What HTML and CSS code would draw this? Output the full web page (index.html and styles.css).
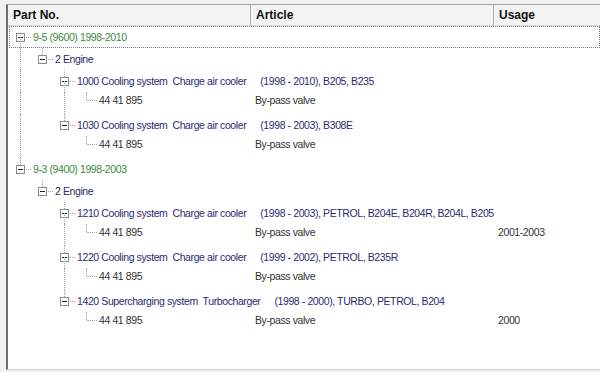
FILE: index.html
```html
<!DOCTYPE html>
<html lang="en">
<head>
    <meta charset="UTF-8">
    <title>Parts tree</title>
    <link rel="stylesheet" href="styles.css">
</head>
<body>
    <div class="window">
        <div class="header">
            <div class="hcell col-part">Part No.</div>
            <div class="hcell col-article">Article</div>
            <div class="hcell col-usage">Usage</div>
        </div>

        <div class="tree">
            <!-- 9-5 -->
            <div class="row model selected">
                <span class="g dn"><span class="stem"></span><span class="knot"><span class="box"></span><span class="dash"></span></span><span class="stem"></span></span>
                <span class="label">9-5 (9600) 1998-2010</span>
            </div>
            <div class="row group">
                <span class="g pipe"><span class="stem"></span></span>
                <span class="g up"><span class="stem"></span><span class="knot"><span class="box"></span><span class="dash"></span></span><span class="stem"></span></span>
                <span class="label">2 Engine</span>
            </div>
            <div class="row part">
                <span class="g pipe"><span class="stem"></span></span>
                <span class="g"></span>
                <span class="g up dn"><span class="stem"></span><span class="knot"><span class="box"></span><span class="dash"></span></span><span class="stem"></span></span>
                <span class="label">1000 Cooling system  Charge air cooler<span class="spec">(1998 - 2010), B205, B235</span></span>
            </div>
            <div class="row leaf">
                <div class="cell-part">
                    <span class="g pipe"><span class="stem"></span></span>
                    <span class="g"></span>
                    <span class="g pipe"><span class="stem"></span></span>
                    <span class="g up"><span class="stem"></span><span class="knot"><span class="dash"></span></span><span class="stem"></span></span>
                    <span class="label">44 41 895</span>
                </div>
                <div class="cell-article">By-pass valve</div>
                <div class="cell-usage"></div>
            </div>
            <div class="row part">
                <span class="g pipe"><span class="stem"></span></span>
                <span class="g"></span>
                <span class="g up"><span class="stem"></span><span class="knot"><span class="box"></span><span class="dash"></span></span><span class="stem"></span></span>
                <span class="label">1030 Cooling system  Charge air cooler<span class="spec">(1998 - 2003), B308E</span></span>
            </div>
            <div class="row leaf">
                <div class="cell-part">
                    <span class="g pipe"><span class="stem"></span></span>
                    <span class="g"></span>
                    <span class="g"></span>
                    <span class="g up"><span class="stem"></span><span class="knot"><span class="dash"></span></span><span class="stem"></span></span>
                    <span class="label">44 41 895</span>
                </div>
                <div class="cell-article">By-pass valve</div>
                <div class="cell-usage"></div>
            </div>

            <!-- 9-3 -->
            <div class="row model">
                <span class="g up"><span class="stem"></span><span class="knot"><span class="box"></span><span class="dash"></span></span><span class="stem"></span></span>
                <span class="label">9-3 (9400) 1998-2003</span>
            </div>
            <div class="row group">
                <span class="g"></span>
                <span class="g up"><span class="stem"></span><span class="knot"><span class="box"></span><span class="dash"></span></span><span class="stem"></span></span>
                <span class="label">2 Engine</span>
            </div>
            <div class="row part">
                <span class="g"></span>
                <span class="g"></span>
                <span class="g up dn"><span class="stem"></span><span class="knot"><span class="box"></span><span class="dash"></span></span><span class="stem"></span></span>
                <span class="label">1210 Cooling system  Charge air cooler<span class="spec">(1998 - 2003), PETROL, B204E, B204R, B204L, B205</span></span>
            </div>
            <div class="row leaf">
                <div class="cell-part">
                    <span class="g"></span>
                    <span class="g"></span>
                    <span class="g pipe"><span class="stem"></span></span>
                    <span class="g up"><span class="stem"></span><span class="knot"><span class="dash"></span></span><span class="stem"></span></span>
                    <span class="label">44 41 895</span>
                </div>
                <div class="cell-article">By-pass valve</div>
                <div class="cell-usage">2001-2003</div>
            </div>
            <div class="row part">
                <span class="g"></span>
                <span class="g"></span>
                <span class="g up dn"><span class="stem"></span><span class="knot"><span class="box"></span><span class="dash"></span></span><span class="stem"></span></span>
                <span class="label">1220 Cooling system  Charge air cooler<span class="spec">(1999 - 2002), PETROL, B235R</span></span>
            </div>
            <div class="row leaf">
                <div class="cell-part">
                    <span class="g"></span>
                    <span class="g"></span>
                    <span class="g pipe"><span class="stem"></span></span>
                    <span class="g up"><span class="stem"></span><span class="knot"><span class="dash"></span></span><span class="stem"></span></span>
                    <span class="label">44 41 895</span>
                </div>
                <div class="cell-article">By-pass valve</div>
                <div class="cell-usage"></div>
            </div>
            <div class="row part">
                <span class="g"></span>
                <span class="g"></span>
                <span class="g up"><span class="stem"></span><span class="knot"><span class="box"></span><span class="dash"></span></span><span class="stem"></span></span>
                <span class="label">1420 Supercharging system  Turbocharger<span class="spec">(1998 - 2000), TURBO, PETROL, B204</span></span>
            </div>
            <div class="row leaf">
                <div class="cell-part">
                    <span class="g"></span>
                    <span class="g"></span>
                    <span class="g"></span>
                    <span class="g up"><span class="stem"></span><span class="knot"><span class="dash"></span></span><span class="stem"></span></span>
                    <span class="label">44 41 895</span>
                </div>
                <div class="cell-article">By-pass valve</div>
                <div class="cell-usage">2000</div>
            </div>
        </div>
    </div>
</body>
</html>
```

FILE: styles.css
```css
body {
    margin: 0;
    background: #f0f0f0;
    font-family: "Liberation Sans", Arial, sans-serif;
    font-size: 10.5px;
    letter-spacing: -0.4px;
    color: #333;
}

.window {
    margin: 4px 0 0 6px;
    height: 364px;
    background: #fff;
    border-top: 1px solid #a0a0a0;
    border-left: 2px solid #6e6e6e;
    border-bottom: 1px solid #d4d4d4;
    overflow: hidden;
}

/* column header */

.header {
    display: flex;
    height: 20px;
    background: #f3f3f3;
    border-bottom: 1px solid #d8d8d8;
    font-size: 12px;
    font-weight: bold;
    letter-spacing: 0;
    color: #111;
}

.hcell {
    line-height: 20px;
    padding-left: 5px;
    white-space: nowrap;
}

.col-part {
    width: 237px;
    border-right: 1px solid #a8a8a8;
}

.col-article {
    width: 237px;
    border-right: 1px solid #a8a8a8;
}

.col-usage {
    flex: 1;
}

/* tree rows */

.tree {
    padding-left: 1px;
}

.row {
    display: flex;
    height: 22px;
    white-space: pre;
}

.row.selected {
    outline: 1px dotted #7a7a7a;
    outline-offset: -1px;
}

.label {
    line-height: 22px;
    padding-left: 2px;
}

.model .label {
    color: #3b8a3b;
}

.group .label,
.part .label {
    color: #2b2b72;
}

.spec {
    margin-left: 14px;
}

.leaf .label,
.cell-article,
.cell-usage {
    line-height: 17px;
}

.cell-part {
    display: flex;
    width: 246px;
}

.cell-article {
    width: 243px;
}

.cell-usage {
    flex: 1;
}

/* tree lines: each gutter cell is 22px wide, line runs at its centre */

.g {
    display: flex;
    flex-direction: column;
    width: 22px;
    flex-shrink: 0;
}

.stem {
    flex: 1;
    margin-left: 11px;
}

.pipe .stem,
.up > .stem:first-child,
.dn > .stem:last-child {
    border-left: 1px dotted #a3a3a3;
}

.leaf .up > .stem:first-child {
    flex: none;
    height: 8px;
}

.knot {
    display: flex;
    align-items: center;
    height: 0;
}

.box {
    width: 9px;
    height: 9px;
    margin-left: 7px;
    box-sizing: border-box;
    border: 1px solid #8c8c8c;
    background: linear-gradient(#222, #222) center / 5px 1px no-repeat, #fff;
    flex-shrink: 0;
}

.dash {
    flex: 1;
    height: 0;
    margin-left: 1px;
    border-top: 1px dotted #a3a3a3;
}

.knot > .dash:first-child {
    margin-left: 12px;
}
```
